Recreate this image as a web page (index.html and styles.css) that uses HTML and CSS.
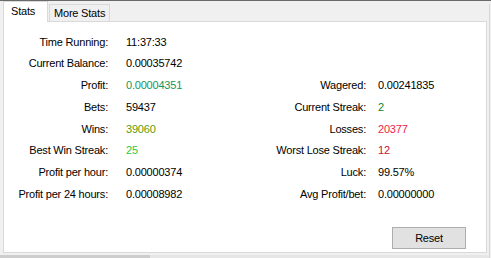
FILE: index.html
```html
<!DOCTYPE html>
<html lang="en">
<head>
    <meta charset="UTF-8">
    <title>Stats</title>
    <link rel="stylesheet" href="styles.css">
</head>
<body>
    <div class="window">
        <div class="tabs">
            <div class="tab active">Stats</div>
            <div class="tab">More Stats</div>
        </div>

        <div class="panel">
            <div class="stats">
                <span class="label">Time Running:</span>
                <span class="value">11:37:33</span>
                <span class="label"></span>
                <span class="value"></span>

                <span class="label">Current Balance:</span>
                <span class="value">0.00035742</span>
                <span class="label"></span>
                <span class="value"></span>

                <span class="label">Profit:</span>
                <span class="value profit">0.00004351</span>
                <span class="label">Wagered:</span>
                <span class="value">0.00241835</span>

                <span class="label">Bets:</span>
                <span class="value">59437</span>
                <span class="label">Current Streak:</span>
                <span class="value streak">2</span>

                <span class="label">Wins:</span>
                <span class="value wins">39060</span>
                <span class="label">Losses:</span>
                <span class="value losses">20377</span>

                <span class="label">Best Win Streak:</span>
                <span class="value best">25</span>
                <span class="label">Worst Lose Streak:</span>
                <span class="value worst">12</span>

                <span class="label">Profit per hour:</span>
                <span class="value">0.00000374</span>
                <span class="label">Luck:</span>
                <span class="value">99.57%</span>

                <span class="label">Profit per 24 hours:</span>
                <span class="value">0.00008982</span>
                <span class="label">Avg Profit/bet:</span>
                <span class="value">0.00000000</span>
            </div>

            <div class="actions">
                <button class="btn">Reset</button>
            </div>
        </div>

        <div class="hscroll">
            <div class="thumb"></div>
        </div>
    </div>
    <div class="edge"></div>
</body>
</html>
```

FILE: styles.css
```css
html, body {
    margin: 0;
    padding: 0;
}

body {
    width: 491px;
    height: 258px;
    overflow: hidden;
    box-sizing: border-box;
    border-top: 1px solid #6a6a6a;
    background: #f0f0f0;
    font-family: 'Liberation Sans', Arial, sans-serif;
    font-size: 11px;
    letter-spacing: -0.2px;
    color: #000;
    display: flex;
}

.window {
    width: 489px;
    display: flex;
    flex-direction: column;
}

.edge {
    width: 1px;
    margin-top: 3px;
    background: #d8d8d8;
}

/* tab strip */
.tabs {
    display: flex;
    align-items: flex-end;
    height: 20px;
}

.tab {
    box-sizing: border-box;
    border: 1px solid #d9d9d9;
    border-bottom: none;
    background: #f0f0f0;
    height: 17px;
    width: 61px;
    margin-left: 1px;
    padding: 2px 0 0 4px;
    line-height: 13px;
}

.tab.active {
    position: relative;
    z-index: 1;
    background: #fff;
    width: 45px;
    height: 21px;
    margin-left: 3px;
    margin-bottom: -1px;
    padding: 3px 0 0 7px;
}

/* content */
.panel {
    box-sizing: border-box;
    margin-left: 3px;
    width: 484px;
    height: 232px;
    border: 1px solid #d9d9d9;
    background: #fff;
    display: flex;
    flex-direction: column;
}

.stats {
    display: grid;
    grid-template-columns: 104px 118px 140px 1fr;
    grid-auto-rows: 21.8px;
    line-height: 21.8px;
    padding-top: 9.5px;
}

.label {
    text-align: right;
    white-space: nowrap;
}

.value {
    white-space: nowrap;
    padding-left: 18px;
}

.value:nth-child(4n) {
    padding-left: 12px;
}

.profit { color: #15955a; }
.streak { color: #0a8a28; }
.wins { color: #5f9a08; }
.best { color: #2fc63a; }
.losses { color: #ee1c4a; }
.worst { color: #c8103c; }

.actions {
    margin-top: auto;
    display: flex;
    justify-content: flex-end;
    padding: 0 20px 3px 0;
}

.btn {
    box-sizing: border-box;
    width: 74px;
    height: 22px;
    border: 1px solid #adadad;
    background: #e1e1e1;
    font-family: inherit;
    font-size: 11px;
    letter-spacing: -0.2px;
    color: #000;
    padding: 0;
}

.hscroll {
    margin-top: 2px;
    height: 3px;
    background: #e6e6e6;
}

.thumb {
    width: 150px;
    height: 3px;
    background: #cdcdcd;
}
```
